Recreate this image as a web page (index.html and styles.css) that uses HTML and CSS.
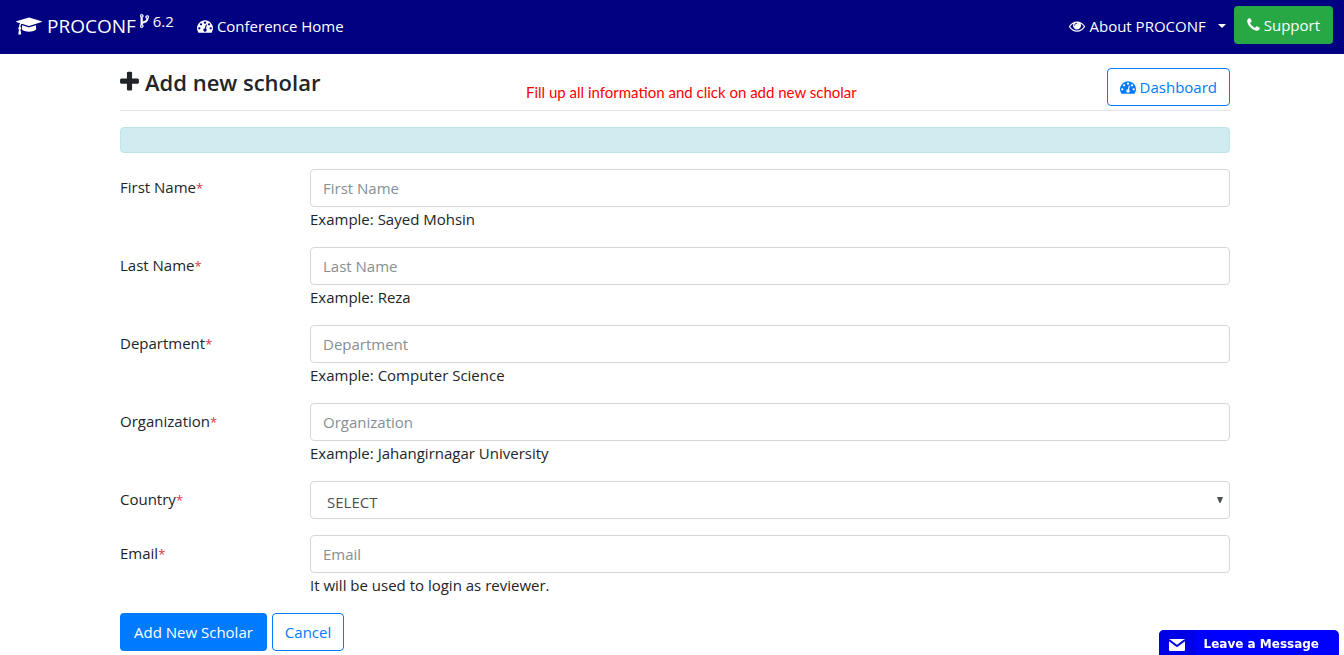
FILE: index.html
```
<!DOCTYPE html>
<html lang="en">
<head>
<meta charset="utf-8">
<title>Add new scholar - PROCONF</title>
<link rel="stylesheet" href="styles.css">
</head>
<body>
<svg class="sprite" aria-hidden="true">
  <symbol id="cap" viewBox="0 0 2304 1792"><path d="M1774 836l18 316q4 69-82 128t-235 93.500-323 34.500-323-34.500-235-93.500-82-128l18-316 574 181q22 7 48 7t48-7zm530-324q0 23-22 31l-1120 352q-4 1-10 1t-10-1l-652-206q-43 34-71 111.500t-34 178.500q63 36 63 109 0 69-58 107l58 433q2 14-8 25-9 11-24 11h-192q-15 0-24-11-10-11-8-25l58-433q-58-38-58-107 0-73 65-111 11-207 98-330l-333-104q-22-8-22-31t22-31l1120-352q4-1 10-1t10 1l1120 352q22 8 22 31z"/></symbol>
  <symbol id="fork" viewBox="384 0 1024 1792"><path d="M672 1472q0-40-28-68t-68-28-68 28-28 68 28 68 68 28 68-28 28-68zm0-1152q0-40-28-68t-68-28-68 28-28 68 28 68 68 28 68-28 28-68zm640 128q0-40-28-68t-68-28-68 28-28 68 28 68 68 28 68-28 28-68zm96 0q0 52-26 96.500t-70 69.500q-2 287-226 414-67 38-203 81-128 40-169.500 71t-41.500 100v26q44 25 70 69.500t26 96.500q0 80-56 136t-136 56-136-56-56-136q0-52 26-96.500t70-69.500v-820q-44-25-70-69.500t-26-96.500q0-80 56-136t136-56 136 56 56 136q0 52-26 96.500t-70 69.500v497q54-26 154-57 55-17 87.500-29.500t70.500-31 59-39.500 40.500-51 28-69.500 8.500-91.500q-44-25-70-69.500t-26-96.500q0-80 56-136t136-56 136 56 56 136z"/></symbol>
  <symbol id="dash" viewBox="0 0 1792 1792"><path d="M384 1152q0-53-37.500-90.500t-90.500-37.500-90.500 37.500-37.500 90.500 37.500 90.500 90.500 37.500 90.500-37.500 37.500-90.500zm192-448q0-53-37.500-90.500t-90.500-37.500-90.500 37.500-37.500 90.500 37.500 90.500 90.500 37.500 90.500-37.500 37.500-90.500zm428 481l101-382q6-26-7.500-48.500t-38.500-29.500-48 6.500-30 39.500l-101 382q-60 5-107 43.500t-63 98.500q-20 77 20 146t117 89 146-20 89-117q16-60-6-117t-72-91zm660-33q0-53-37.500-90.500t-90.500-37.500-90.500 37.500-37.500 90.500 37.500 90.500 90.500 37.500 90.500-37.500 37.500-90.500zm-640-640q0-53-37.500-90.500t-90.500-37.500-90.500 37.500-37.500 90.500 37.500 90.500 90.500 37.500 90.500-37.500 37.500-90.500zm448 192q0-53-37.500-90.500t-90.500-37.500-90.500 37.500-37.500 90.500 37.500 90.500 90.500 37.500 90.500-37.500 37.500-90.500zm320 448q0 261-141 483-19 29-54 29h-1402q-35 0-54-29-141-221-141-483 0-182 71-348t191-286 286-191 348-71 348 71 286 191 191 286 71 348z"/></symbol>
  <symbol id="eye" viewBox="0 0 1792 1792"><path d="M1664 960q-152-236-381-353 61 104 61 225 0 185-131.500 316.500t-316.500 131.500-316.500-131.500-131.500-316.500q0-121 61-225-229 117-381 353 133 205 333.500 326.500t434.500 121.500 434.500-121.500 333.500-326.500zm-720-384q0-20-14-34t-34-14q-125 0-214.500 89.500t-89.500 214.500q0 20 14 34t34 14 34-14 14-34q0-86 61-147t147-61q20 0 34-14t14-34zm848 384q0 34-20 69-140 230-376.500 368.500t-499.500 138.500-499.500-139-376.500-368q-20-35-20-69t20-69q140-229 376.500-368t499.500-139 499.500 139 376.500 368q20 35 20 69z"/></symbol>
  <symbol id="phone" viewBox="192 0 1408 1792"><path d="M1600 1240q0 27-10 70.500t-21 68.500q-21 50-122 106-94 51-186 51-27 0-53-3.500t-57.500-12.500-47-14.500-55.500-20.500-49-18q-98-35-175-83-127-79-264-216t-216-264q-48-77-83-175-3-9-18-49t-20.500-55.500-14.500-47-12.500-57.500-3.500-53q0-92 51-186 56-101 106-122 25-11 68.500-21t70.500-10q14 0 21 3 18 6 53 76 11 19 30 54t35 63.500 31 53.500q3 4 17.500 25t21.500 35.500 7 28.500q0 20-28.500 50t-62 55-62 53-28.500 46q0 9 5 22.500t8.500 20.500 14 24 11.500 19q76 137 174 235t235 174q2 1 19 11.500t24 14 20.500 8.500 22.500 5q18 0 46-28.500t53-62 55-62 50-28.500q14 0 28.500 7t35.500 21.500 25 17.500q25 15 53.500 31t63.500 35 54 30q70 35 76 53 3 7 3 21z"/></symbol>
  <symbol id="plus" viewBox="192 0 1408 1792"><path d="M1600 736v192q0 40-28 68t-68 28h-416v416q0 40-28 68t-68 28h-192q-40 0-68-28t-28-68v-416h-416q-40 0-68-28t-28-68v-192q0-40 28-68t68-28h416v-416q0-40 28-68t68-28h192q40 0 68 28t28 68v416h416q40 0 68 28t28 68z"/></symbol>
</svg>

<nav class="navbar">
  <a class="brand" href="#">
    <svg class="icon-cap"><use href="#cap"/></svg>
    <span class="brand-name">PROCONF</span>
    <span class="version"><svg class="icon-fork"><use href="#fork"/></svg>6.2</span>
  </a>
  <a class="nav-link" href="#"><svg class="icon"><use href="#dash"/></svg>Conference Home</a>
  <div class="nav-right">
    <a class="nav-link" href="#"><svg class="icon"><use href="#eye"/></svg>About PROCONF<span class="caret"></span></a>
    <a class="btn btn-success" href="#"><svg class="icon-narrow"><use href="#phone"/></svg>Support</a>
  </div>
</nav>

<main class="page">
  <div class="content">
    <header class="page-head">
      <h1 class="title"><svg class="icon-plus"><use href="#plus"/></svg>Add new scholar</h1>
      <p class="notice">Fill up all information and click on add new scholar</p>
      <a class="btn btn-outline" href="#"><svg class="icon"><use href="#dash"/></svg>Dashboard</a>
    </header>
    <div class="alert"></div>
    <form class="form">
      <div class="row">
        <label class="label" for="first">First Name<span class="req">*</span></label>
        <div class="field"><input class="control" id="first" type="text" placeholder="First Name"><span class="help">Example: Sayed Mohsin</span></div>
      </div>
      <div class="row">
        <label class="label" for="last">Last Name<span class="req">*</span></label>
        <div class="field"><input class="control" id="last" type="text" placeholder="Last Name"><span class="help">Example: Reza</span></div>
      </div>
      <div class="row">
        <label class="label" for="dept">Department<span class="req">*</span></label>
        <div class="field"><input class="control" id="dept" type="text" placeholder="Department"><span class="help">Example: Computer Science</span></div>
      </div>
      <div class="row">
        <label class="label" for="org">Organization<span class="req">*</span></label>
        <div class="field"><input class="control" id="org" type="text" placeholder="Organization"><span class="help">Example: Jahangirnagar University</span></div>
      </div>
      <div class="row">
        <label class="label" for="country">Country<span class="req">*</span></label>
        <div class="field select-wrap">
          <select class="control select" id="country"><option>SELECT</option></select>
          <svg class="arrow" viewBox="0 0 6 6"><path d="M0 0h6L3.500 6h-1z"/></svg>
        </div>
      </div>
      <div class="row">
        <label class="label" for="email">Email<span class="req">*</span></label>
        <div class="field"><input class="control" id="email" type="email" placeholder="Email"><span class="help">It will be used to login as reviewer.</span></div>
      </div>
      <div class="actions">
        <button class="btn btn-primary" type="submit">Add New Scholar</button>
        <button class="btn btn-outline" type="button">Cancel</button>
      </div>
    </form>
  </div>
</main>

<button class="chat" type="button">
  <span class="chat-icon"><svg class="mail" viewBox="0 0 16 12"><rect width="16" height="12" rx="1" fill="#fff"/><path d="M0 1l8 6 8-6" fill="none" stroke="#0000e6" stroke-width="2"/></svg></span>
  <span class="chat-text">Leave a Message</span>
</button>
</body>
</html>
```
FILE: styles.css
```
* { box-sizing: border-box; }
body {
  margin: 0;
  font-family: "Open Sans", "Noto Sans", sans-serif;
  font-size: 15px;
  line-height: 24px;
  color: #212529;
  background: #fff;
}
a { text-decoration: none; }
svg { fill: currentColor; flex: none; }
.sprite { display: none; }
.icon { width: 16px; height: 16px; }
.icon-narrow { width: 13px; height: 16px; }
.icon-cap { width: 26px; height: 20px; }
.icon-fork { width: 9px; height: 16px; stroke: currentColor; stroke-width: 60px; }
.icon-plus { width: 19px; height: 24px; }

.navbar {
  display: flex;
  align-items: center;
  height: 54px;
  padding: 0 11px 2px 16px;
  background: #000080;
  color: #fff;
}
.brand { display: flex; align-items: center; color: #fff; margin-right: 23px; }
.brand-name { font-size: 19px; margin: 0 4px 0 5px; }
.version { display: flex; align-items: center; gap: 4px; padding-bottom: 10px; }
.nav-link { display: flex; align-items: center; gap: 4px; color: #fff; }
.nav-right { display: flex; align-items: center; gap: 8px; margin-left: auto; padding-bottom: 2px; }
.nav-right .nav-link { padding-top: 2px; }
.caret {
  margin-left: 8px;
  border: 4px solid transparent;
  border-top-color: #fff;
  border-bottom: 0;
}

.btn {
  display: inline-flex;
  align-items: center;
  gap: 4px;
  height: 38px;
  padding: 0 12px;
  border: 1px solid transparent;
  border-radius: 4px;
  font: inherit;
  background: #fff;
}
.btn-success { background: #28a745; color: #fff; }
.btn-outline { border-color: #007bff; color: #007bff; }
.btn-primary { background: #007bff; color: #fff; padding: 0 13px; }

.page { padding: 0 15px 0 21px; }
.content { max-width: 1110px; margin: 0 auto; }
.page-head {
  display: grid;
  grid-template-columns: 406px 1fr auto;
  align-items: center;
  padding: 14px 0 4px;
  border-bottom: 1px solid #e5e5e5;
}
.title {
  display: flex;
  align-items: center;
  gap: 6px;
  margin: 0;
  padding-bottom: 10px;
  font-size: 22px;
  line-height: 28px;
  font-weight: 600;
}
.notice {
  margin: 0;
  padding-top: 10px;
  font-family: Lato, sans-serif;
  font-size: 15px;
  color: #f00;
}
.alert {
  height: 26px;
  margin: 16px 0;
  background: #d1ecf1;
  border: 1px solid #bee5eb;
  border-radius: 4px;
}
.row { display: grid; grid-template-columns: 190px 1fr; margin-bottom: 16px; }
.label { padding-top: 6px; }
.req { color: #dc3545; font-size: 13px; }
.field { display: flex; flex-direction: column; }
.control {
  width: 100%;
  height: 38px;
  padding: 0 12px;
  border: 1px solid #d5d8db;
  border-radius: 4px;
  font: inherit;
  color: #495057;
  background: #fff;
}
.control::placeholder { color: #868e96; opacity: 1; }
.select-wrap { position: relative; }
.select { appearance: none; padding: 4px 16px 0; }
.arrow { position: absolute; right: 7px; top: 16px; width: 6px; height: 6px; color: #495057; pointer-events: none; }
.actions { display: flex; gap: 5px; }

.chat {
  position: fixed;
  right: 5px;
  bottom: 0;
  display: flex;
  width: 180px;
  height: 25px;
  padding: 0;
  border: 0;
  border-radius: 5px 5px 0 0;
  overflow: hidden;
  background: #00f;
  color: #fff;
  font: bold 12px/28px "DejaVu Sans", sans-serif;
}
.chat-icon { display: flex; justify-content: center; width: 36px; height: 25px; padding-top: 9px; background: #0000e6; }
.mail { width: 16px; height: 12px; }
.chat-text { flex: 1; text-align: right; padding-right: 20px; white-space: nowrap; }
```
